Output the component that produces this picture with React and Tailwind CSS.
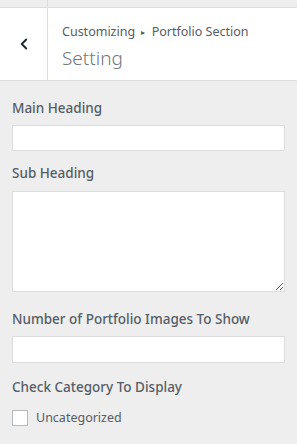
import { ChevronLeft } from "lucide-react";

export default function App() {
  const label = "text-[13.5px] leading-[20px] font-medium";
  return (
    <div
      className="w-[297px] h-[444px] overflow-hidden bg-[#eeeeee] text-[#555d66]"
      style={{ fontFamily: '"Noto Sans", "Open Sans", sans-serif' }}
    >
      {/* strip of the panel above */}
      <div className="flex h-[8px] border-b border-[#dddddd]">
        <div className="w-[48px] border-r border-[#dddddd]" />
      </div>

      <div className="flex h-[73px] bg-white border-b border-[#dddddd]">
        <button className="flex w-[48px] items-center justify-center border-r border-[#dddddd] text-[#23282d]">
          <ChevronLeft size={18} strokeWidth={2.5} />
        </button>
        <div className="flex flex-col pl-[14px] pt-[15px]">
          <span className="text-[12.5px] leading-[18px] text-[#555d66]">
            Customizing <span className="text-[8px] align-[1px] px-[3px]">▸</span> Portfolio Section
          </span>
          <span className="text-[19px] leading-[26px] mt-[4px] font-light text-[#72777c]">Setting</span>
        </div>
      </div>

      <div className="flex flex-col px-[12px] pt-[17px]">
        <div className={label}>Main Heading</div>
        <input className="block w-full h-[26px] mt-[7px] bg-white border border-[#dddddd] outline-none" />

        <div className={`${label} mt-[12px]`}>Sub Heading</div>
        <textarea className="block w-full h-[101px] mt-[8px] bg-white border border-[#dddddd] outline-none resize-y" />

        <div className={`${label} mt-[17px]`}>Number of Portfolio Images To Show</div>
        <input className="block w-full h-[27px] mt-[7px] bg-white border border-[#dddddd] outline-none" />

        <div className={`${label} mt-[14px]`}>Check Category To Display</div>
        <label className="flex items-center gap-[8px] mt-[13px]">
          <span className="w-[16px] h-[16px] bg-white border border-[#b4b9be]" />
          <span className="text-[12.5px] leading-[16px]">Uncategorized</span>
        </label>
      </div>
    </div>
  );
}
